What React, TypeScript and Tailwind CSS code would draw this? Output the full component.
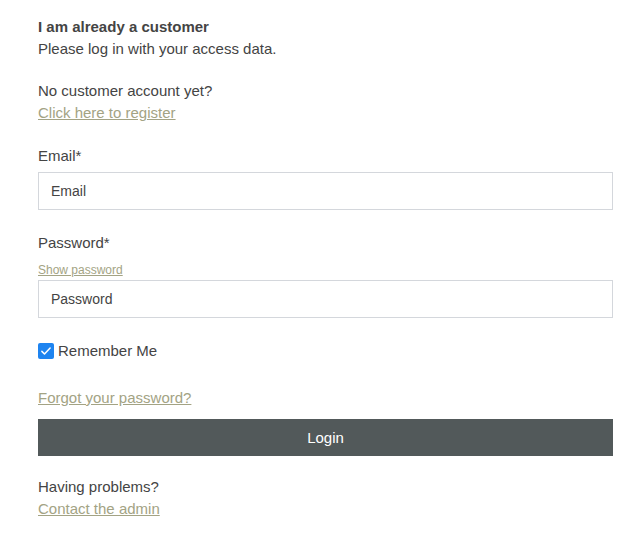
import { useState } from "react";

export default function App() {
  const [remember, setRemember] = useState(true);

  return (
    <div className="min-h-screen bg-white text-[15px] leading-[22px] text-[#444] font-['Liberation_Sans',Arial,sans-serif]">
      <div className="pl-[38px] pr-[31px] pt-4 pb-4">
        {/* Intro */}
        <h2 className="font-bold">I am already a customer</h2>
        <p>Please log in with your access data.</p>

        <p className="mt-5">No customer account yet?</p>
        <a href="#" className="text-[#a3a384] underline">
          Click here to register
        </a>

        {/* Email */}
        <label className="block mt-[21px]">Email*</label>
        <input
          type="email"
          placeholder="Email"
          className="mt-[5px] block w-full h-[38px] border border-[#d4d7dc] px-3 text-[14px] text-[#333] placeholder:text-[#444] outline-none"
        />

        {/* Password */}
        <label className="block mt-[22px]">Password*</label>
        <a href="#" className="block mt-2 text-[12px] leading-4 text-[#a3a384] underline">
          Show password
        </a>
        <input
          type="password"
          placeholder="Password"
          className="mt-[2px] block w-full h-[38px] border border-[#d4d7dc] px-3 text-[14px] text-[#333] placeholder:text-[#444] outline-none"
        />

        {/* Remember me */}
        <label
          className="mt-[22px] flex items-center gap-1 cursor-pointer select-none"
          onClick={() => setRemember(!remember)}
        >
          <span
            className={`flex h-4 w-4 items-center justify-center rounded-[2px] ${
              remember ? "bg-[#1e84f0]" : "border border-[#767676] bg-white"
            }`}
          >
            {remember && (
              <svg viewBox="0 0 16 16" className="h-3 w-3" fill="none">
                <path d="M2.5 8.5l3.5 3.5 7.5-8" stroke="white" strokeWidth="2" strokeLinecap="round" strokeLinejoin="round" />
              </svg>
            )}
          </span>
          Remember Me
        </label>

        <a href="#" className="block mt-[25px] text-[#a3a384] underline">
          Forgot your password?
        </a>

        <button className="mt-[10px] block w-full h-[37px] bg-[#52595a] text-white">
          Login
        </button>

        <p className="mt-5">Having problems?</p>
        <a href="#" className="text-[#a3a384] underline">
          Contact the admin
        </a>
      </div>
    </div>
  );
}
